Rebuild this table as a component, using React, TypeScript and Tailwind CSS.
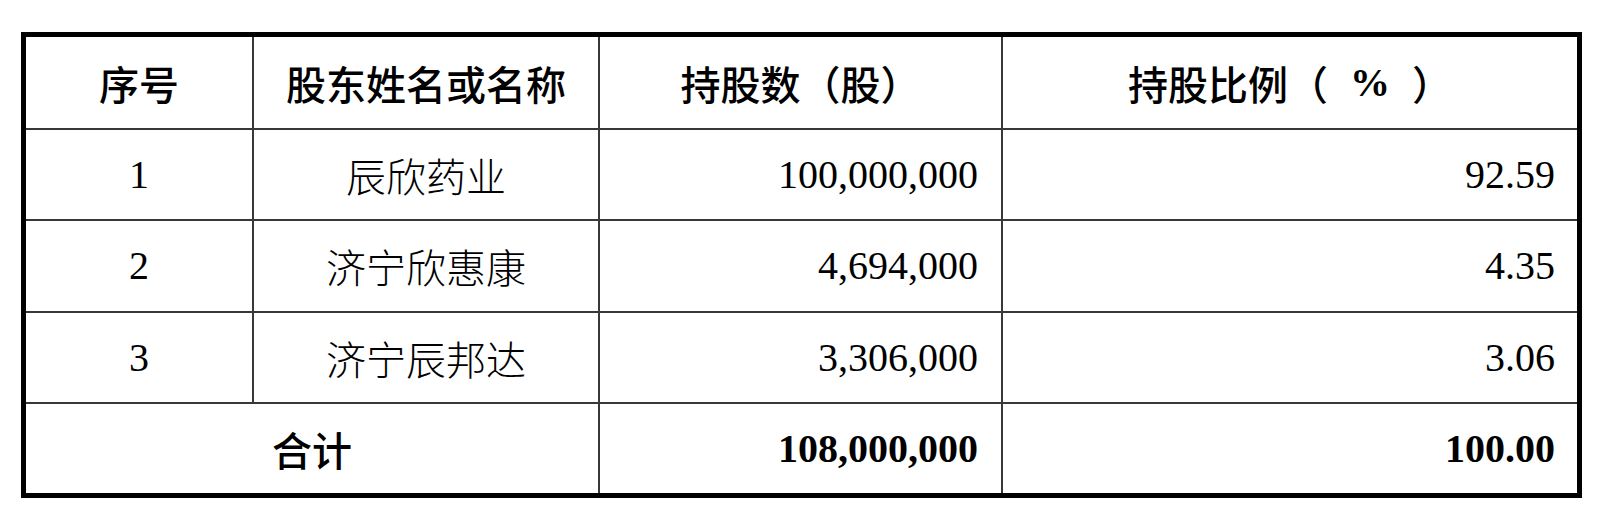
const rows = [
  { no: '1', name: '辰欣药业', shares: '100,000,000', ratio: '92.59' },
  { no: '2', name: '济宁欣惠康', shares: '4,694,000', ratio: '4.35' },
  { no: '3', name: '济宁辰邦达', shares: '3,306,000', ratio: '3.06' },
];

const serif = 'font-["Liberation_Serif","Noto_Sans_CJK_SC",serif]';
const cjk = 'font-["Noto_Sans_CJK_SC",sans-serif]';
const line = 'border-[#383838]';

export default function App() {
  return (
    <div className="w-[1600px] h-[506px] bg-white pt-[32px] pl-[21px]">
      <div className="w-[1561px] border-[5px] border-black text-black text-[40px] leading-none">
        <div className={`grid grid-cols-[228px_346px_403px_574px] h-[93px] border-b-2 ${line}`}>
          <div className={`flex items-center justify-center border-r-2 ${line} ${cjk} font-medium`}>序号</div>
          <div className={`flex items-center justify-center border-r-2 ${line} ${cjk} font-medium`}>股东姓名或名称</div>
          <div className={`flex items-center justify-center border-r-2 ${line} ${cjk} font-medium`}>持股数（股）</div>
          <div className={`flex items-center justify-center ${serif} font-bold`}>
            <span className={`${cjk} font-medium`}>持股比例（</span>
            <span className="px-[22px]">%</span>
            <span className={`${cjk} font-medium`}>）</span>
          </div>
        </div>
        {rows.map((r, i) => (
          <div key={r.no} className={`grid grid-cols-[228px_346px_403px_574px] border-b-2 ${line} ${i === 1 ? 'h-[92px]' : 'h-[91px]'}`}>
            <div className={`flex items-center justify-center border-r-2 ${line} ${serif}`}>{r.no}</div>
            <div className={`flex items-center justify-center border-r-2 ${line} ${cjk} font-light`}>{r.name}</div>
            <div className={`flex items-center justify-end pr-[23px] border-r-2 ${line} ${serif}`}>{r.shares}</div>
            <div className={`flex items-center justify-end pr-[22px] ${serif}`}>{r.ratio}</div>
          </div>
        ))}
        <div className="grid grid-cols-[574px_403px_574px] h-[89px]">
          <div className={`flex items-center justify-center border-r-2 ${line} ${cjk} font-medium`}>合计</div>
          <div className={`flex items-center justify-end pr-[23px] border-r-2 ${line} ${serif} font-bold`}>108,000,000</div>
          <div className={`flex items-center justify-end pr-[22px] ${serif} font-bold`}>100.00</div>
        </div>
      </div>
    </div>
  );
}
